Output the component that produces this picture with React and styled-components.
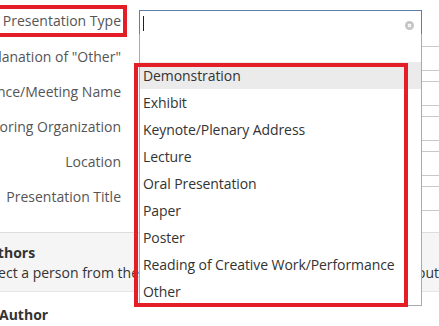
import React from "react";
import styled, { createGlobalStyle } from "styled-components";

const GlobalStyle = createGlobalStyle`
  body {
    margin: 0;
    background: #fff;
    overflow: hidden;
    font-family: "Open Sans", "Noto Sans", sans-serif;
    font-size: 14px;
    color: #333;
  }
`;

const otherFields = [
  'Explanation of "Other"',
  "Conference/Meeting Name",
  "Sponsoring Organization",
  "Location",
  "Presentation Title",
];

const types = [
  "Demonstration",
  "Exhibit",
  "Keynote/Plenary Address",
  "Lecture",
  "Oral Presentation",
  "Paper",
  "Poster",
  "Reading of Creative Work/Performance",
  "Other",
];

const App = () => {
  return (
    <>
      <GlobalStyle />
      <Page>
        <Form>
          <Row>
            <Label $marked>Presentation Type</Label>
            <Select>
              <Caret />
              <Clear>
                <svg width="9" height="9" viewBox="0 0 9 9">
                  <circle cx="4.5" cy="4.5" r="4.5" fill="#c4c4c4" />
                  <path d="M3 3 L6 6 M6 3 L3 6" stroke="#fff" strokeWidth="1.2" />
                </svg>
              </Clear>
              <Dropdown>
                <Option />
                {types.map((t, i) => (
                  <Option key={t} $active={i === 0}>
                    {t}
                  </Option>
                ))}
                <Highlight />
              </Dropdown>
            </Select>
          </Row>
          {otherFields.map((f) => (
            <Row key={f}>
              <Label>{f}</Label>
              <TextInput readOnly />
            </Row>
          ))}
        </Form>
        <Section>
          <SectionTitle>Authors</SectionTitle>
          <SectionText>
            Select a person from the campus directory, or enter information
            about each author below.
          </SectionText>
        </Section>
        <Heading>Author</Heading>
      </Page>
    </>
  );
};

const Page = styled.div`
  margin-left: -60px;
  width: 800px;
`;

const Form = styled.div`
  display: flex;
  flex-direction: column;
  gap: 10px;
  padding-top: 8px;
  > :first-child {
    margin-bottom: 1px;
  }
`;

const Row = styled.div`
  display: grid;
  grid-template-columns: 187px 560px;
  column-gap: 12px;
  align-items: center;
  height: 25px;
`;

const Label = styled.div`
  justify-self: end;
  white-space: nowrap;
  line-height: 24px;
  padding: 0 2px 0 3px;
  margin-top: -3px;
  color: #555;
  border: 4px solid ${(p) => (p.$marked ? "#e31e26" : "transparent")};
`;

const Select = styled.div`
  position: relative;
  width: 283px;
  height: 25px;
  box-sizing: border-box;
  border: 1px solid #5f7ea8;
  border-bottom-color: #aaa;
  background: #fff;
`;

const Caret = styled.span`
  position: absolute;
  left: 3px;
  top: 5px;
  width: 1px;
  height: 15px;
  background: #222;
`;

const Clear = styled.span`
  position: absolute;
  right: 7px;
  top: 10px;
  width: 9px;
  height: 9px;
  display: flex;
`;

const Dropdown = styled.div`
  position: absolute;
  top: 100%;
  left: -1px;
  width: 283px;
  box-sizing: border-box;
  border: 1px solid #aaa;
  border-top: none;
  background: #fff;
  z-index: 5;
  > :first-child {
    height: 28px;
  }
`;

const Option = styled.div`
  height: 27px;
  line-height: 27px;
  padding-left: 3px;
  white-space: nowrap;
  letter-spacing: -0.08px;
  color: #333;
  background: ${(p) => (p.$active ? "#ebebeb" : "transparent")};
`;

const Highlight = styled.div`
  position: absolute;
  left: -6px;
  top: 29px;
  width: 274px;
  height: 244px;
  box-sizing: border-box;
  border: 4px solid #e31e26;
  pointer-events: none;
`;

const TextInput = styled.input`
  width: 560px;
  height: 25px;
  box-sizing: border-box;
  border: 1px solid #c8c8c8;
  padding: 0 4px;
  font: inherit;
  outline: none;
`;

const Section = styled.div`
  margin-top: 23px;
  padding: 10px 0 8px 39px;
  background: #f5f5f5;
  border-top: 1px solid #ddd;
  border-bottom: 1px solid #e6e6e6;
  line-height: 20px;
`;

const SectionTitle = styled.div`
  font-weight: 700;
  color: #333;
`;

const SectionText = styled.div`
  white-space: nowrap;
  color: #333;
`;

const Heading = styled.div`
  margin-top: 13px;
  padding-left: 59px;
  font-weight: 700;
  line-height: 20px;
  color: #333;
`;

export default App;
